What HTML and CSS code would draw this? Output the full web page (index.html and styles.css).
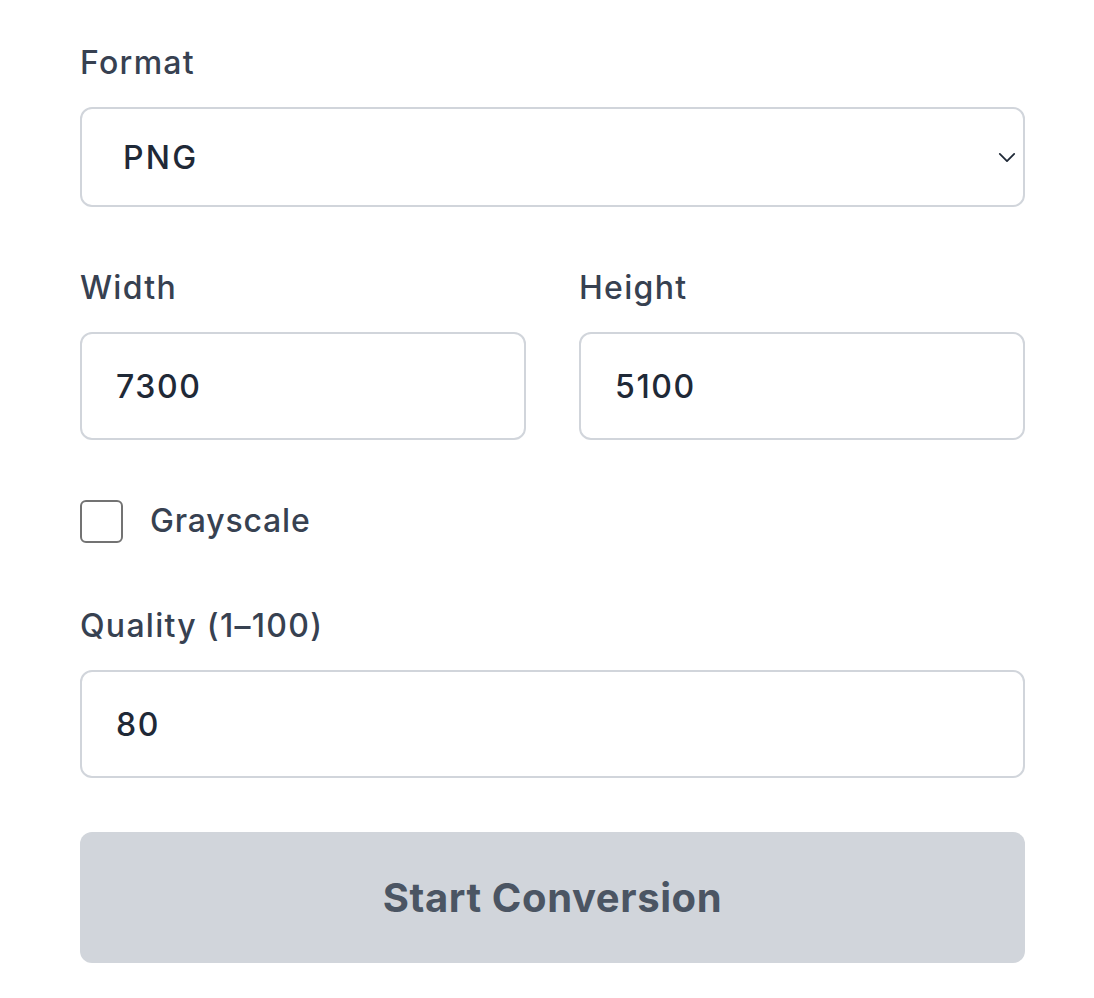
FILE: index.html
```html
<!DOCTYPE html>
<html lang="en">
<head>
<meta charset="utf-8">
<title>Conversion settings</title>
<link rel="stylesheet" href="styles.css">
</head>
<body>
<form class="form">
  <div class="field">
    <label class="label" for="format">Format</label>
    <div class="select-wrap">
      <select id="format" class="select">
        <option>PNG</option>
        <option>JPEG</option>
        <option>WEBP</option>
      </select>
      <svg class="chevron" width="20" height="12" viewBox="0 0 20 12" aria-hidden="true">
        <path d="M2 2 L10 10 L18 2" fill="none" stroke="#1f2937" stroke-width="2" stroke-linecap="round" stroke-linejoin="round"/>
      </svg>
    </div>
  </div>

  <div class="row">
    <div class="field">
      <label class="label" for="width">Width</label>
      <input id="width" class="input" type="text" value="7300">
    </div>
    <div class="field">
      <label class="label" for="height">Height</label>
      <input id="height" class="input" type="text" value="5100">
    </div>
  </div>

  <label class="check-row">
    <input class="checkbox" type="checkbox">
    <span class="check-label">Grayscale</span>
  </label>

  <div class="field">
    <label class="label" for="quality">Quality (1–100)</label>
    <input id="quality" class="input" type="text" value="80">
  </div>

  <button type="button" class="button">Start Conversion</button>
</form>
</body>
</html>
```

FILE: styles.css
```css
* { box-sizing: border-box; }

html, body {
  margin: 0;
  padding: 0;
  background: #ffffff;
}

body {
  font-family: Inter, "Noto Sans", "Liberation Sans", sans-serif;
  color: #374151;
  padding: 39px 0 0 80px;
}

.form {
  width: 945px;
  display: flex;
  flex-direction: column;
  gap: 57px;
}

.field {
  display: flex;
  flex-direction: column;
  gap: 20px;
}

.label {
  font-size: 32px;
  line-height: 48px;
  font-weight: 500;
  letter-spacing: 0.04em;
  color: #374151;
}

.select-wrap {
  position: relative;
}

.select {
  appearance: none;
  -webkit-appearance: none;
  width: 100%;
  height: 100px;
  border: 2px solid #d1d5db;
  border-radius: 12px;
  background: #ffffff;
  padding: 0 40px 0 41px;
  font-family: inherit;
  font-size: 32px;
  font-weight: 500;
  letter-spacing: 0.07em;
  color: #1f2937;
  outline: none;
}

.chevron {
  position: absolute;
  right: 9px;
  top: 50%;
  margin-top: -5px;
  width: 18px;
  height: 11px;
  pointer-events: none;
}

.row {
  display: grid;
  grid-template-columns: 1fr 1fr;
  gap: 53px;
}

.input {
  width: 100%;
  height: 108px;
  border: 2px solid #d1d5db;
  border-radius: 12px;
  background: #ffffff;
  padding: 0 34px;
  font-family: inherit;
  font-size: 32px;
  font-weight: 500;
  letter-spacing: 0.05em;
  color: #1f2937;
  outline: none;
}

.check-row {
  display: flex;
  align-items: center;
  gap: 27px;
  height: 48px;
}

.checkbox {
  appearance: none;
  -webkit-appearance: none;
  margin: 0;
  width: 43px;
  height: 43px;
  border: 2px solid #737373;
  border-radius: 6px;
  background: #ffffff;
}

.check-label {
  font-size: 32px;
  line-height: 48px;
  font-weight: 500;
  letter-spacing: 0.025em;
  color: #374151;
}

.button {
  margin-top: -3px;
  height: 131px;
  width: 100%;
  border: none;
  border-radius: 12px;
  background: #d1d5db;
  color: #4b5563;
  font-family: inherit;
  font-size: 40px;
  font-weight: 700;
  letter-spacing: 0.015em;
}
```
